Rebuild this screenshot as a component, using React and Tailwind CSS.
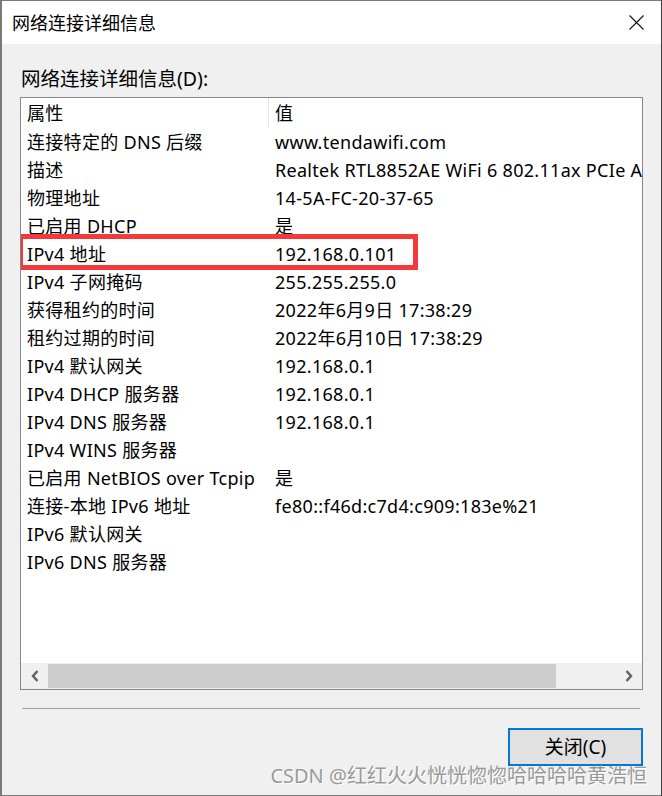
import React from "react";

const font = { fontFamily: '"Noto Sans", "Noto Sans CJK SC", sans-serif' };

const rows = [
    ["连接特定的 DNS 后缀", "www.tendawifi.com"],
    ["描述", "Realtek RTL8852AE WiFi 6 802.11ax PCIe Adapter"],
    ["物理地址", "14-5A-FC-20-37-65"],
    ["已启用 DHCP", "是"],
    ["IPv4 地址", "192.168.0.101", true],
    ["IPv4 子网掩码", "255.255.255.0"],
    ["获得租约的时间", "2022年6月9日 17:38:29"],
    ["租约过期的时间", "2022年6月10日 17:38:29"],
    ["IPv4 默认网关", "192.168.0.1"],
    ["IPv4 DHCP 服务器", "192.168.0.1"],
    ["IPv4 DNS 服务器", "192.168.0.1"],
    ["IPv4 WINS 服务器", ""],
    ["已启用 NetBIOS over Tcpip", "是"],
    ["连接-本地 IPv6 地址", "fe80::f46d:c7d4:c909:183e%21"],
    ["IPv6 默认网关", ""],
    ["IPv6 DNS 服务器", ""],
];

function Row({ name, value, marked }) {
    return (
        <div className="relative flex h-[28px] items-center whitespace-nowrap">
            <div className="w-[248px] shrink-0 pl-[6px]">{name}</div>
            <div className="pl-[6px]">{value}</div>
            {marked && (
                <div className="absolute left-[-3px] top-[-6px] h-[36px] w-[400px] border-[5px] border-[#f23a3c]" />
            )}
        </div>
    );
}

export default function App() {
    return (
        <div className="w-[662px] h-[796px] bg-[#3b3b3b] flex text-black text-[18px]" style={font}>
            <div className="w-[661px] h-[796px] bg-[#f0f0f0] border-l-2 border-t border-b border-[#7a7a7a] flex flex-col relative">
                {/* title bar */}
                <div className="h-[43px] bg-white flex items-center justify-between pl-[10px] pr-[17px]">
                    <span className="leading-none">网络连接详细信息</span>
                    <svg width="15" height="15" viewBox="0 0 15 15">
                        <path d="M0.5 0.5 L14.5 14.5 M14.5 0.5 L0.5 14.5" stroke="#111" strokeWidth="1.1" />
                    </svg>
                </div>

                <div className="px-[18px] flex flex-col">
                    <div className="mt-[22px] leading-[25px] text-[19.5px] pl-[1px]">网络连接详细信息(D):</div>

                    {/* list view */}
                    <div className="mt-[6px] h-[593px] border border-[#828790] bg-white flex flex-col tracking-[0.3px]">
                        <div className="flex-1 overflow-hidden">
                            <div className="flex h-[30px] items-center whitespace-nowrap">
                                <div className="w-[247px] shrink-0 pl-[6px]">属性</div>
                                <div className="h-[30px] w-px bg-[#e5e5e5]" />
                                <div className="pl-[6px]">值</div>
                            </div>
                            {rows.map(([n, v, m]) => (
                                <Row key={n} name={n} value={v} marked={m} />
                            ))}
                        </div>

                        {/* horizontal scrollbar */}
                        <div className="h-[26px] bg-[#f0f0f0] flex items-stretch">
                            <div className="w-[27px] flex items-center justify-center">
                                <svg width="8" height="12" viewBox="0 0 8 12">
                                    <path d="M6.5 1 L2 6 L6.5 11" fill="none" stroke="#606060" strokeWidth="2.4" />
                                </svg>
                            </div>
                            <div className="w-[508px] my-[1px] bg-[#cdcdcd]" />
                            <div className="flex-1" />
                            <div className="w-[27px] flex items-center justify-center">
                                <svg width="8" height="12" viewBox="0 0 8 12">
                                    <path d="M1.5 1 L6 6 L1.5 11" fill="none" stroke="#606060" strokeWidth="2.4" />
                                </svg>
                            </div>
                        </div>
                    </div>

                    <div className="mt-[18px] h-px bg-[#a0a0a0] mr-[3px] ml-[2px]" />

                    <div className="mt-[19px] flex justify-end">
                        <button className="w-[135px] h-[38px] bg-[#e1e1e1] border-2 border-[#0078d7] leading-none text-[19px]">
                            关闭(C)
                        </button>
                    </div>
                </div>

                {/* watermark */}
                <div className="absolute right-[14px] bottom-[9px] text-[#9a9a9a] text-[20px] leading-none [text-shadow:1px_1px_0_#ffffff]">
                    CSDN @红红火火恍恍惚惚哈哈哈哈黄浩恒
                </div>
            </div>
        </div>
    );
}
